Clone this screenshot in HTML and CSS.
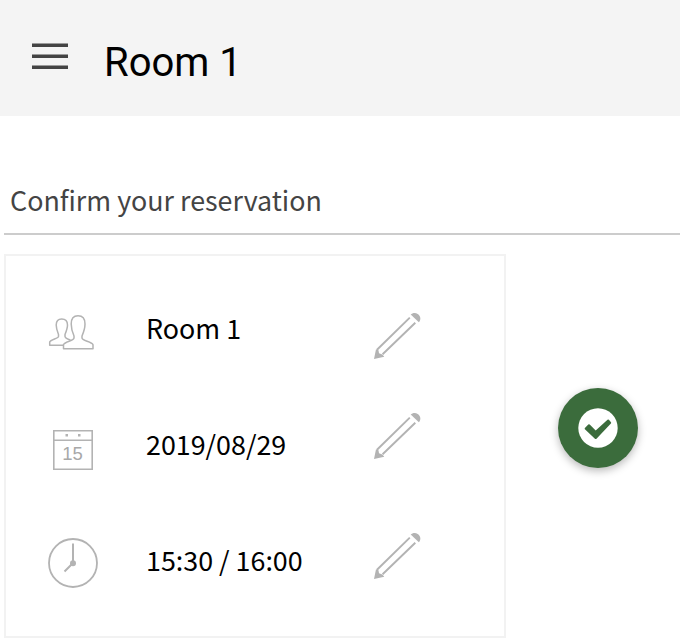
FILE: index.html
```html
<!DOCTYPE html>
<html lang="en">
<head>
<meta charset="utf-8">
<title>Room 1</title>
<link rel="stylesheet" href="styles.css">
</head>
<body>
<svg width="0" height="0" class="defs">
  <symbol id="pencil" viewBox="0 0 48 48">
    <path d="M3 37.800 35.800 5.600M8.600 42.300 41.300 10.800" fill="none" stroke="#b3b3b3" stroke-width="1.900"/>
    <path d="M0 47 2 37.200 4.500 38.300 5 41.300 8.300 42.500 10.300 44.700Z" fill="#b3b3b3"/>
    <path d="M36.700 2.600C38.500.6 41.500.4 43.700 1.900C46.600 4 47.300 7.400 44.900 10.200Z" fill="#b3b3b3"/>
  </symbol>
</svg>
<header class="topbar">
  <button class="menu" aria-label="Menu"><i></i><i></i><i></i></button>
  <h1 class="title">Room 1</h1>
</header>
<main class="page">
  <h2 class="heading">Confirm your reservation</h2>
  <div class="content">
    <section class="card">
      <div class="row row-room">
        <svg class="icon" width="50" height="50" viewBox="0 0 50 50" fill="none" stroke="#b3b3b3" stroke-width="1.500" stroke-linejoin="round">
          <path d="M15.300 38.300H1.700V35C2.500 32.500 10.500 31.500 10.500 29.500V27.500C9.500 25 8.200 21 8.200 18C8.200 13.500 10 11.900 13.700 11.900S19.500 13.500 19.500 18C19.500 21 18 25 17 27.500V29.500C17 31.200 19.500 32 22.500 33"/>
          <path d="M15.500 41.800V37.700C16.500 34.500 26 33.800 26 31V29C24.500 25.500 23.200 21.500 23.200 17C23.200 11 25.500 8.800 30 8.800S37 11 37 17C37 21.500 35.500 25.500 34 29V31C34 33.800 44 34.500 45 37.700V41.800Z"/>
        </svg>
        <span class="value">Room 1</span>
        <svg class="pencil" width="48" height="48"><use href="#pencil"/></svg>
      </div>
      <div class="row row-date">
        <svg class="icon" width="50" height="50" viewBox="0 0 50 50">
          <path d="M5.800 10.800H44.200V49.200H5.800ZM5.800 20.200H44.200" fill="none" stroke="#b3b3b3" stroke-width="1.600"/>
          <path d="M17.500 14h2.500v2.500h-2.500zM30 14h2.500v2.500H30z" fill="#b3b3b3"/>
          <text class="day" x="24.500" y="40" text-anchor="middle">15</text>
        </svg>
        <span class="value">2019/08/29</span>
        <svg class="pencil" width="48" height="48"><use href="#pencil"/></svg>
      </div>
      <div class="row row-time">
        <svg class="icon" width="50" height="50" viewBox="0 0 50 50" fill="none" stroke="#b3b3b3">
          <circle cx="25" cy="25" r="24" stroke-width="1.800"/>
          <path d="M25 5.500V25L16.500 33.500" stroke-width="2"/>
          <circle cx="25" cy="25.200" r="3" fill="#b3b3b3" stroke="none"/>
        </svg>
        <span class="value">15:30 / 16:00</span>
        <svg class="pencil" width="48" height="48"><use href="#pencil"/></svg>
      </div>
    </section>
    <button class="confirm" aria-label="Confirm">
      <svg width="40" height="40" viewBox="0 0 40 40">
        <circle cx="20" cy="20" r="19.700" fill="#fff"/>
        <path d="M6.900 19.900 10.300 16.500Q11 16 11.700 16.600L17.700 22.600 29.500 11.700Q30.200 11.200 30.900 11.800L33 14.200Q33.400 14.900 32.900 15.500L18.500 30.700Q17.700 31.400 16.900 30.700L6.900 21.300Q6.300 20.600 6.900 19.900Z" fill="#3b6c3c"/>
      </svg>
    </button>
  </div>
</main>
</body>
</html>
```

FILE: styles.css
```css
* { box-sizing: border-box; }
body {
  margin: 0;
  width: 680px;
  height: 644px;
  overflow: hidden;
  background: #fff;
  font-family: "Noto Sans CJK SC", "Noto Sans", sans-serif;
}
.defs { display: none; }
button { border: 0; padding: 0; margin: 0; }
.topbar {
  display: flex;
  height: 116px;
  padding-left: 32px;
  background: #f4f4f4;
}
.menu {
  display: flex;
  flex-direction: column;
  gap: 7px;
  width: 36px;
  margin-top: 43px;
  background: none;
}
.menu i {
  height: 4px;
  background: linear-gradient(#9b9b9b 1px, #444 1px);
}
.title {
  margin: 39px 0 0 36px;
  font: 400 40px/48px Roboto, sans-serif;
  color: #000;
}
.page { padding-left: 4px; }
.heading {
  height: 119px;
  margin: 0;
  padding: 64px 0 0 6px;
  border-bottom: 2px solid #ccc;
  font-size: 26.85px;
  font-weight: 400;
  line-height: 40px;
  color: #444;
}
.content {
  display: flex;
  align-items: flex-start;
  margin-top: 19px;
}
.card {
  width: 502px;
  height: 384px;
  padding: 15px 0 0 42px;
  border: 2px solid #f2f2f2;
}
.row {
  display: grid;
  grid-template-columns: 50px 180px 48px;
  column-gap: 48px;
  height: 116px;
}
.value {
  font-size: 26.85px;
  line-height: 114px;
  white-space: nowrap;
  color: #000;
}
.icon { margin-top: 36px; }
.pencil { margin-top: 41px; }
.row-date .pencil { margin-top: 25px; }
.row-time .pencil { margin-top: 29px; }
.row-time .icon { margin-top: 35px; }
.row-date .icon { margin-top: 33px; }
.day {
  font: 18.5px "Liberation Sans", sans-serif;
  fill: #a8a8a8;
}
.confirm {
  display: flex;
  align-items: center;
  justify-content: center;
  width: 80px;
  height: 80px;
  margin: 134px 0 0 52px;
  border-radius: 50%;
  background: #3b6c3c;
  box-shadow: 0 3px 9px rgba(0, 0, 0, .28);
}
```
